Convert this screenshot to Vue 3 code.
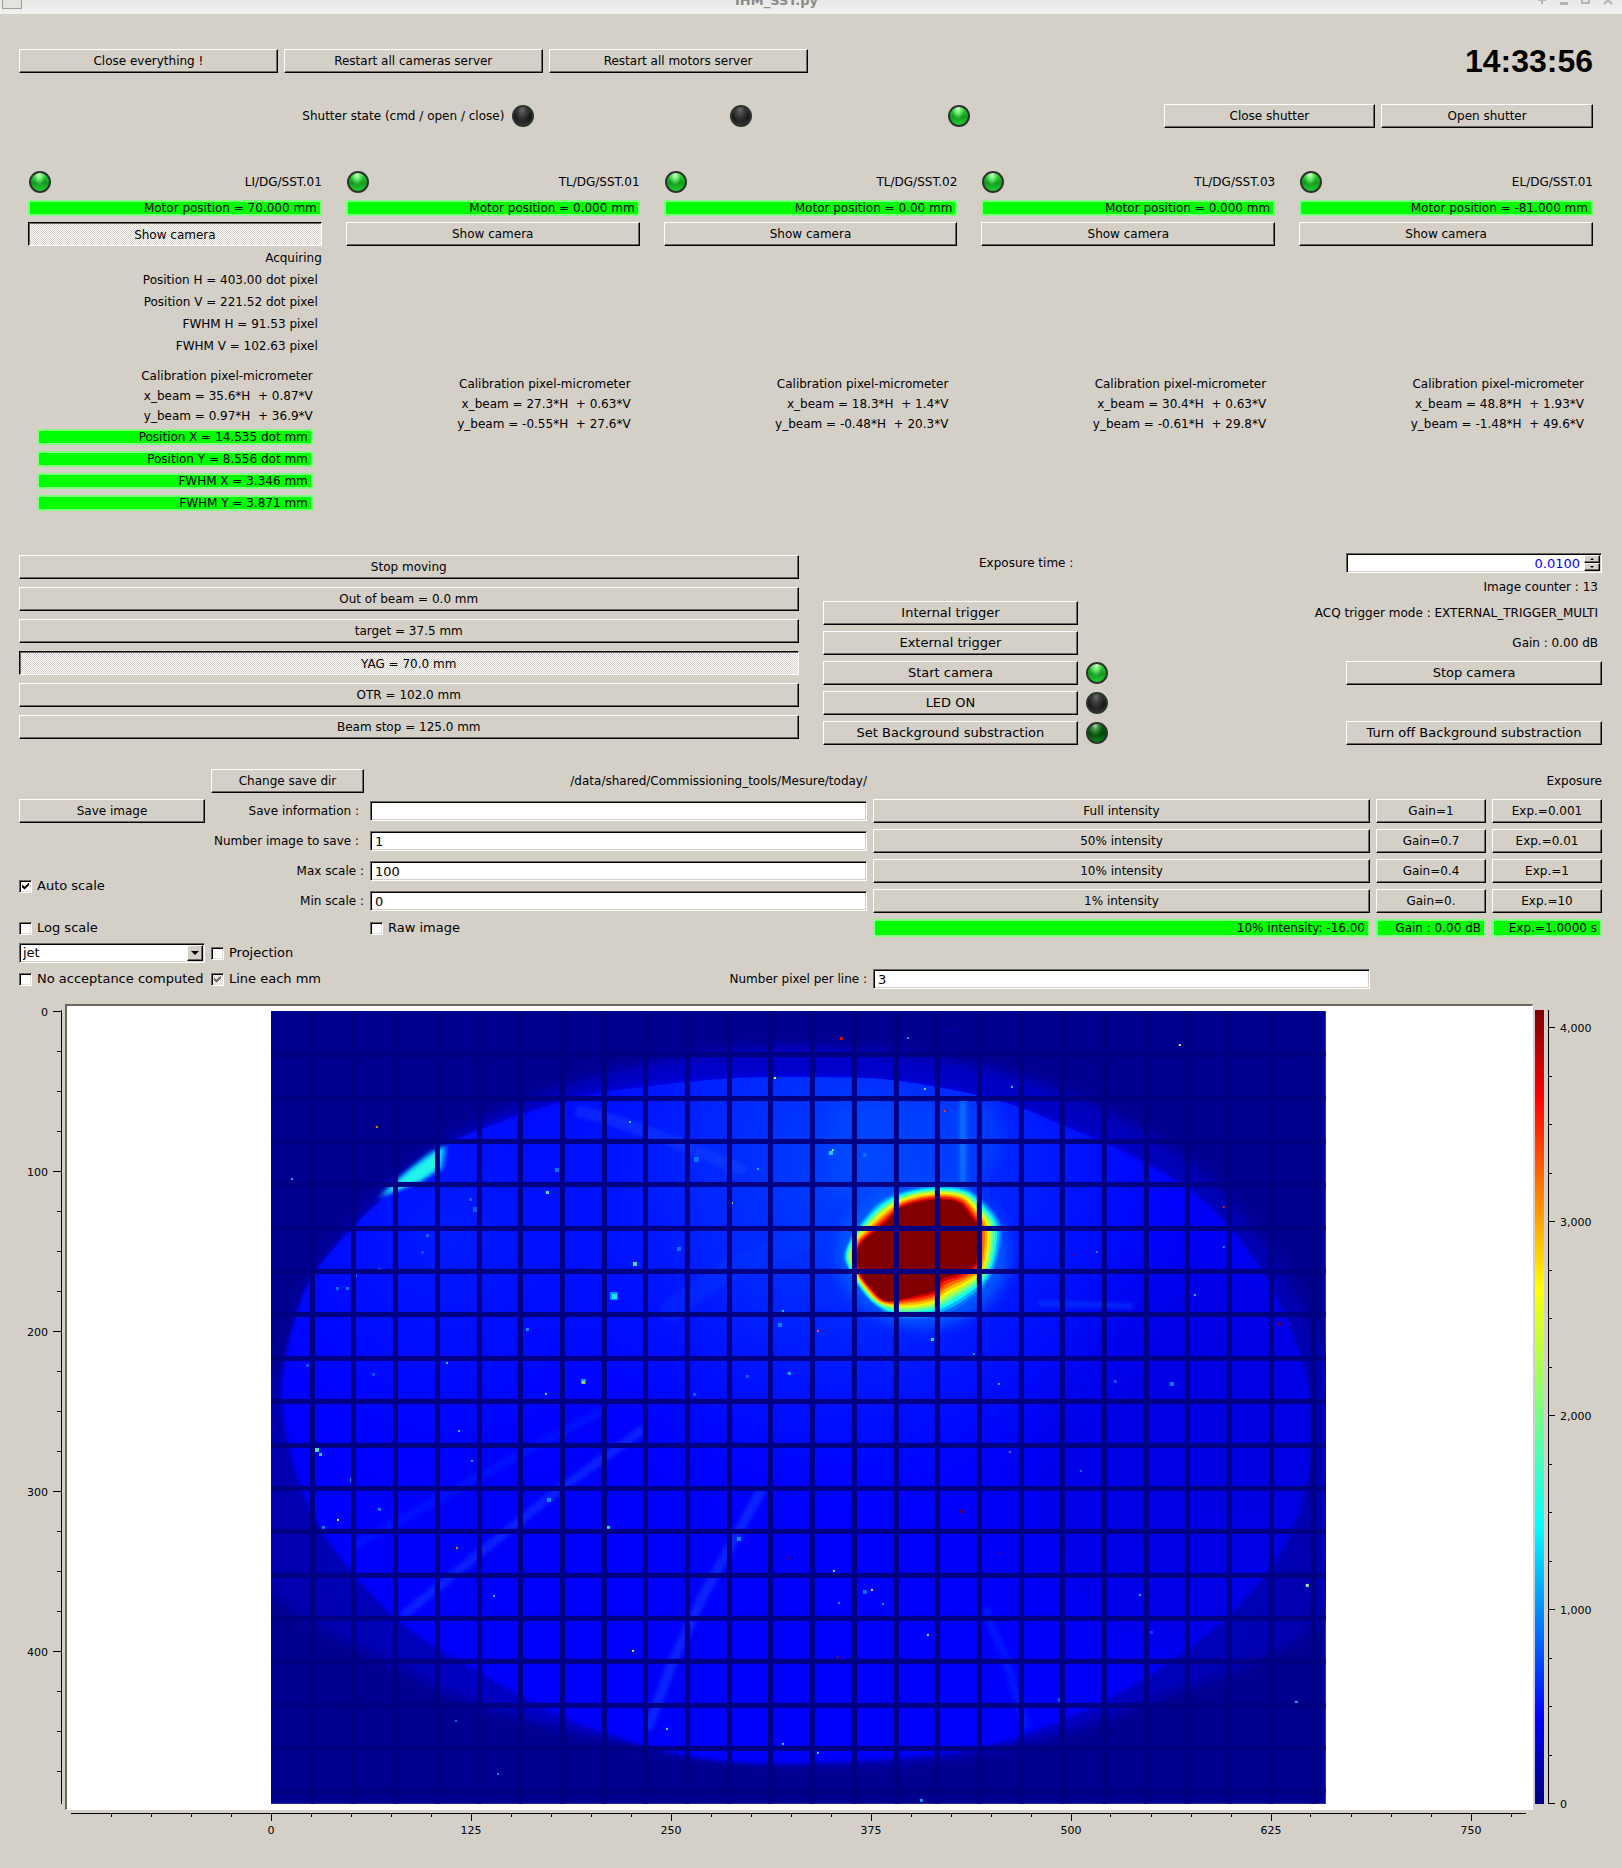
<script setup>
import { ref } from 'vue'

const stations = [
  { name: 'LI/DG/SST.01', motor: '70.000', x: '35.6*H  + 0.87*V', y: '0.97*H  + 36.9*V', active: true },
  { name: 'TL/DG/SST.01', motor: '0.000', x: '27.3*H  + 0.63*V', y: '-0.55*H  + 27.6*V' },
  { name: 'TL/DG/SST.02', motor: '0.00', x: '18.3*H  + 1.4*V', y: '-0.48*H  + 20.3*V' },
  { name: 'TL/DG/SST.03', motor: '0.000', x: '30.4*H  + 0.63*V', y: '-0.61*H  + 29.8*V' },
  { name: 'EL/DG/SST.01', motor: '-81.000', x: '48.8*H  + 1.93*V', y: '-1.48*H  + 49.6*V' }
]
const readings = [
  'Position H = 403.00 dot pixel',
  'Position V = 221.52 dot pixel',
  'FWHM H = 91.53 pixel',
  'FWHM V = 102.63 pixel'
]
const results = [
  'Position X = 14.535 dot mm',
  'Position Y = 8.556 dot mm',
  'FWHM X = 3.346 mm',
  'FWHM Y = 3.871 mm'
]
const moves = [
  'Stop moving',
  'Out of beam = 0.0 mm',
  'target = 37.5 mm',
  'YAG = 70.0 mm',
  'OTR = 102.0 mm',
  'Beam stop = 125.0 mm'
]
const activeMove = 3

const exposure = ref('0.0100')
const info = ref('')
const count = ref('1')
const maxScale = ref('100')
const minScale = ref('0')
const pixelsPerLine = ref('3')
const autoScale = ref(true)
const logScale = ref(false)
const rawImage = ref(false)
const projection = ref(false)
const noAcceptance = ref(false)
const lineEachMm = ref(true)
const colormap = ref('jet')

const presets = [
  ['Full intensity', 'Gain=1', 'Exp.=0.001'],
  ['50% intensity', 'Gain=0.7', 'Exp.=0.01'],
  ['10% intensity', 'Gain=0.4', 'Exp.=1'],
  ['1% intensity', 'Gain=0.', 'Exp.=10']
]

/* axes, as a percentage of the axis length */
const rowTicks = Array.from({ length: 20 }, (_, i) => ({
  pos: ((8 + i * 40) / 806) * 100 + '%',
  label: i % 4 === 0 ? String(i * 25) : ''
}))
const colTicks = Array.from({ length: 36 }, (_, k) => {
  const i = k - 4
  return {
    pos: ((206 + i * 40) / 1468) * 100 + '%',
    label: i >= 0 && i % 5 === 0 ? String(i * 25) : ''
  }
})
  .filter((t) => parseFloat(t.pos) < 99)
const levelTicks = Array.from({ length: 17 }, (_, i) => ({
  pos: ((800 - i * 48.5) / 806) * 100 + '%',
  label: i % 4 === 0 ? (i * 250).toLocaleString('en-US') : ''
}))

/* closed smooth outline through a list of points */
function smooth(p) {
  const n = p.length
  let d = `M${p[0][0]} ${p[0][1]}`
  for (let i = 0; i < n; i++) {
    const a = p[(i + n - 1) % n], b = p[i], c = p[(i + 1) % n], e = p[(i + 2) % n]
    d += `C${b[0] + (c[0] - a[0]) / 6} ${b[1] + (c[1] - a[1]) / 6} ${c[0] - (e[0] - b[0]) / 6} ${c[1] - (e[1] - b[1]) / 6} ${c[0]} ${c[1]}`
  }
  return d + 'Z'
}

const halo = smooth([
  [8, 360], [40, 265], [105, 184], [180, 126], [269, 84], [369, 54], [470, 38], [560, 36], [680, 50], [789, 78],
  [909, 142], [989, 225], [1050, 330], [1100, 450], [1055, 600], [979, 653], [879, 690], [789, 723], [679, 746],
  [540, 752], [379, 736], [209, 695], [129, 658], [89, 638], [0, 582], [-60, 480]
])
const screen = smooth([
  [11, 376], [24, 308], [44, 262], [86, 212], [130, 172], [180, 132], [250, 104], [330, 82], [450, 68], [540, 66],
  [629, 70], [729, 90], [800, 118], [879, 154], [939, 196], [985, 252], [1019, 318], [1039, 390], [1036, 466],
  [1011, 538], [969, 592], [929, 628], [859, 676], [779, 714], [689, 740], [540, 752], [440, 749], [369, 733],
  [289, 704], [189, 650], [125, 607], [72, 550], [38, 495], [18, 435]
])

const outer = [
  [120, 225], [180, 160], [260, 125], [350, 112], [440, 122], [500, 170], [540, 230], [535, 310], [510, 385],
  [470, 430], [400, 478], [330, 500], [230, 503], [165, 468], [125, 425], [90, 370], [73, 320], [95, 260]
]
const inner = [
  [150, 260], [200, 218], [245, 175], [340, 152], [415, 160], [455, 205], [472, 235], [472, 310], [462, 350],
  [415, 375], [368, 390], [345, 425], [270, 445], [200, 456], [155, 420], [122, 375], [112, 320], [122, 285]
]
const jet = ['#0070ff', '#00b4ff', '#10f8f0', '#58ffa8', '#a0ff58', '#f0f808', '#ffb800', '#ff7000', '#ff2800', '#d00000', '#800000']
const beam = jet.map((color, k) => {
  const t = (k - 0.6) / (jet.length - 1.6)
  return {
    color,
    d: smooth(outer.map((o, i) => [
      549 + (o[0] + (inner[i][0] - o[0]) * t) / 3,
      138 + (o[1] + (inner[i][1] - o[1]) * t) / 3
    ]))
  }
})

const gridCols = Array.from({ length: 25 }, (_, i) => Math.round((i + 1) * 41.7) - 3)
const gridRows = Array.from({ length: 18 }, (_, i) => Math.round((i + 1) * 43.35) - 2)

/* bright pixels and dust: x, y, size, colour */
const specks = [
  [105, 115, 2, '#ff7000'], [20, 167, 2, '#10b0e0'], [362, 251, 4, '#40e0c0'], [339, 281, 8, '#0090ff'],
  [341, 283, 5, '#20e0f0'], [310, 368, 5, '#1090f0'], [311, 370, 3, '#90e060'], [44, 437, 4, '#40e8a0'],
  [48, 442, 3, '#20d0f0'], [275, 180, 3, '#50e0b0'], [358, 110, 2, '#30d0d0'], [460, 191, 2, '#80f070'],
  [486, 157, 2, '#10c0e0'], [503, 66, 2, '#d0ff30'], [423, 146, 5, '#0a70ff'], [284, 157, 4, '#0a78ff'],
  [406, 236, 4, '#0a70ff'], [255, 317, 3, '#1090ff'], [274, 382, 2, '#30f0f0'], [175, 351, 2, '#20e0d0'],
  [187, 419, 2, '#20d0f0'], [200, 449, 2, '#20b0f0'], [79, 467, 4, '#1090ff'], [107, 497, 3, '#0a80ff'],
  [51, 515, 3, '#1080ff'], [66, 508, 2, '#d0f040'], [185, 536, 2, '#ff7000'], [222, 584, 2, '#30c0f0'],
  [361, 639, 2, '#f0d020'], [184, 709, 2, '#1070f0'], [226, 762, 2, '#1090e0'], [395, 717, 2, '#40f0f0'],
  [511, 732, 2, '#40e0f0'], [336, 515, 3, '#20f0e0'], [466, 526, 4, '#1090ff'], [276, 487, 4, '#1090ff'],
  [516, 546, 2, '#800000'], [517, 361, 3, '#20b0ff'], [507, 312, 4, '#1080ff'], [511, 299, 2, '#20d0e0'],
  [569, 26, 3, '#d01010'], [636, 26, 2, '#1090e0'], [683, 19, 2, '#0000e0'], [908, 33, 2, '#c0ff60'],
  [740, 75, 2, '#20d0d0'], [653, 77, 2, '#60e0a0'], [673, 99, 2, '#ff3000'], [558, 140, 4, '#20d0f0'],
  [561, 138, 2, '#60f0c0'], [592, 142, 4, '#0a70ff'], [952, 195, 2, '#d02000'], [952, 235, 2, '#1090f0'],
  [800, 243, 2, '#500060'], [825, 240, 2, '#1080f0'], [1007, 311, 3, '#700020'], [923, 283, 2, '#30c0ff'],
  [546, 319, 2, '#f06020'], [660, 327, 3, '#20f0f0'], [702, 342, 2, '#20a0f0'], [727, 372, 2, '#20c0e0'],
  [899, 371, 4, '#0a80ff'], [843, 369, 3, '#0a50ff'], [809, 459, 2, '#0a70ff'], [689, 499, 3, '#600040'],
  [738, 440, 2, '#806080'], [728, 541, 2, '#400080'], [600, 578, 2, '#c0f060'], [562, 559, 2, '#a0e0a0'],
  [592, 579, 4, '#0a70ff'], [611, 592, 2, '#1090f0'], [656, 623, 2, '#c0e060'], [567, 591, 2, '#20a0f0'],
  [566, 645, 2, '#a00020'], [868, 583, 2, '#20c0f0'], [1035, 573, 3, '#a0f0a0'], [1024, 690, 3, '#10b0f0'],
  [649, 788, 3, '#10a0f0'], [546, 741, 2, '#40e0f0'], [879, 620, 3, '#0a40ff'], [787, 687, 4, '#0a60ff'],
  [107, 257, 3, '#0a60ff'], [65, 276, 3, '#0a70ff'], [83, 263, 3, '#0a60ff'], [75, 276, 3, '#0a80ff'],
  [202, 196, 5, '#0a60ff'], [198, 187, 3, '#0a60ff'], [155, 223, 3, '#0a70ff'], [150, 240, 3, '#0a50ff'],
  [475, 364, 3, '#0a60ff'], [422, 382, 3, '#0a60ff'], [101, 362, 3, '#0a50ff'], [35, 353, 3, '#0a50ff']
]
</script>

<template>
  <div class="window">
    <header class="titlebar">
      <span class="sysmenu"></span>
      <span class="title">IHM_SST.py</span>
      <svg class="winctl" width="80" height="12" viewBox="0 0 80 12" aria-hidden="true">
        <path d="M5 0h8M9 -4v8M28 3h6v1h-6zM49 -4v7h7v-7M71 4l4-4 4 4" fill="none" stroke="#b4b4b2" stroke-width="2" />
      </svg>
    </header>

    <section class="bar-top">
      <button type="button">Close everything !</button>
      <button type="button">Restart all cameras server</button>
      <button type="button">Restart all motors server</button>
      <time class="clock">14:33:56</time>
    </section>

    <section class="shutter">
      <span class="right">Shutter state (cmd / open / close)</span>
      <i class="led off"></i>
      <i class="led off"></i>
      <i class="led on"></i>
      <button type="button">Close shutter</button>
      <button type="button">Open shutter</button>
    </section>

    <section class="stations">
      <article v-for="s in stations" :key="s.name" class="station">
        <div class="station-head">
          <i class="led on"></i>
          <span>{{ s.name }}</span>
        </div>
        <div class="ok">Motor position = {{ s.motor }} mm</div>
        <button type="button" :class="{ pressed: s.active }">Show camera</button>
        <div v-if="s.active" class="live">
          <p class="status">Acquiring</p>
          <p v-for="r in readings" :key="r">{{ r }}</p>
        </div>
        <div class="calibration" :class="{ idle: !s.active }">
          <p>Calibration pixel-micrometer</p>
          <p>x_beam = {{ s.x }}</p>
          <p>y_beam = {{ s.y }}</p>
        </div>
        <div v-if="s.active" class="results">
          <div v-for="r in results" :key="r" class="ok">{{ r }}</div>
        </div>
      </article>
    </section>

    <section class="controls">
      <div class="moves">
        <button v-for="(m, i) in moves" :key="m" type="button" :class="{ pressed: i === activeMove }">{{ m }}</button>
      </div>
      <div class="camera">
        <label class="right inset" for="exposure">Exposure time :</label>
        <div class="spin">
          <input id="exposure" v-model="exposure" type="text" inputmode="decimal" />
          <div class="spin-buttons">
            <button type="button" aria-label="Increase"><svg viewBox="0 0 4 2"><path d="M0 2h4L2 0z" /></svg></button>
            <button type="button" aria-label="Decrease"><svg viewBox="0 0 4 2"><path d="M0 0h4L2 2z" /></svg></button>
          </div>
        </div>
        <span class="wide">Image counter : 13</span>
        <button type="button">Internal trigger</button>
        <span class="two">ACQ trigger mode : EXTERNAL_TRIGGER_MULTI</span>
        <button type="button">External trigger</button>
        <span class="two">Gain : 0.00 dB</span>
        <button type="button">Start camera</button>
        <i class="led on"></i>
        <button type="button">Stop camera</button>
        <button type="button">LED ON</button>
        <i class="led off"></i>
        <span></span>
        <button type="button">Set Background substraction</button>
        <i class="led dim"></i>
        <button type="button">Turn off Background substraction</button>
      </div>
    </section>

    <section class="save">
      <button class="c2" type="button">Change save dir</button>
      <span class="c3 right">/data/shared/Commissioning_tools/Mesure/today/</span>
      <span class="c6 right">Exposure</span>

      <button class="c1 r2" type="button">Save image</button>
      <label class="c2 r2 right inset" for="info">Save information :</label>
      <input id="info" v-model="info" class="c3 r2" type="text" />
      <label class="c2 r3 right inset" for="count">Number image to save :</label>
      <input id="count" v-model="count" class="c3 r3" type="text" />
      <label class="c2 r4 right" for="max">Max scale :</label>
      <input id="max" v-model="maxScale" class="c3 r4" type="text" />
      <label class="c2 r5 right" for="min">Min scale :</label>
      <input id="min" v-model="minScale" class="c3 r5" type="text" />
      <label class="check c1 auto"><input v-model="autoScale" type="checkbox" />Auto scale</label>

      <div class="presets">
        <template v-for="row in presets" :key="row[0]">
          <button v-for="p in row" :key="p" type="button">{{ p }}</button>
        </template>
      </div>

      <label class="check c1 r6"><input v-model="logScale" type="checkbox" />Log scale</label>
      <label class="check c3 r6"><input v-model="rawImage" type="checkbox" />Raw image</label>
      <div class="ok c4 r6">10% intensity: -16.00</div>
      <div class="ok c5 r6">Gain : 0.00 dB</div>
      <div class="ok c6 r6">Exp.=1.0000 s</div>

      <div class="combo c1 r7">
        <select v-model="colormap" aria-label="Colormap">
          <option>jet</option>
          <option>gray</option>
          <option>hot</option>
        </select>
        <span class="arrow"><svg viewBox="0 0 8 4"><path d="M0 0h8L4 4z" /></svg></span>
      </div>
      <label class="check c2 r7"><input v-model="projection" type="checkbox" />Projection</label>

      <label class="check c1 r8"><input v-model="noAcceptance" type="checkbox" />No acceptance computed</label>
      <label class="check c2 r8"><input v-model="lineEachMm" type="checkbox" class="partial" />Line each mm</label>
      <label class="c3 r8 right" for="ppl">Number pixel per line :</label>
      <input id="ppl" v-model="pixelsPerLine" class="c4 r8" type="text" />
    </section>

    <section class="plot">
      <svg class="axis rows" aria-hidden="true">
        <line x1="61" x2="61" y1="6" y2="99.3%" />
        <template v-for="t in rowTicks" :key="t.pos">
          <line :x1="t.label ? 53 : 57" x2="61" :y1="t.pos" :y2="t.pos" />
          <text v-if="t.label" x="48" :y="t.pos" dy="4" text-anchor="end">{{ t.label }}</text>
        </template>
      </svg>

      <div class="frame">
        <svg class="image" viewBox="0 0 1055 793" preserveAspectRatio="none" role="img" aria-label="Beam image">
          <defs>
            <radialGradient id="haloFill" gradientUnits="userSpaceOnUse" cx="530" cy="420" r="600">
              <stop offset="0.500" stop-color="#0000d8" />
              <stop offset="0.750" stop-color="#0000b8" />
              <stop offset="1" stop-color="#0000a8" />
            </radialGradient>
            <radialGradient id="warm" gradientUnits="userSpaceOnUse" cx="580" cy="160" r="360">
              <stop offset="0" stop-color="#0044ff" />
              <stop offset="0.450" stop-color="#002cff" stop-opacity="0.800" />
              <stop offset="1" stop-color="#0010ff" stop-opacity="0" />
            </radialGradient>
            <radialGradient id="warmLeft" gradientUnits="userSpaceOnUse" cx="180" cy="220" r="260">
              <stop offset="0" stop-color="#001cff" />
              <stop offset="1" stop-color="#0010ff" stop-opacity="0" />
            </radialGradient>
            <radialGradient id="cool" gradientUnits="userSpaceOnUse" cx="960" cy="450" r="340">
              <stop offset="0" stop-color="#0000e0" />
              <stop offset="0.500" stop-color="#0000e8" stop-opacity="0.900" />
              <stop offset="1" stop-color="#0000ff" stop-opacity="0" />
            </radialGradient>
            <filter id="soft2"><feGaussianBlur stdDeviation="2" /></filter>
            <filter id="soft4"><feGaussianBlur stdDeviation="6" /></filter>
            <filter id="soft7"><feGaussianBlur stdDeviation="7" /></filter>
            <clipPath id="screenClip"><path :d="screen" /></clipPath>
          </defs>
          <rect width="1055" height="793" fill="#000090" />
          <path :d="halo" fill="url(#haloFill)" filter="url(#soft4)" />
          <path d="M220 116Q520 6 860 142L860 190H220z" fill="#0000e0" filter="url(#soft7)" />
          <path :d="screen" fill="#0000ff" filter="url(#soft2)" />
          <g clip-path="url(#screenClip)">
            <rect width="1055" height="793" fill="url(#cool)" />
            <rect width="1055" height="793" fill="url(#warmLeft)" />
            <rect width="1055" height="793" fill="url(#warm)" />
            <path d="M560 90H720L735 130 690 210 560 180z" fill="#0050ff" opacity="0.500" filter="url(#soft7)" />
            <g fill="none" stroke-linecap="round" filter="url(#soft2)">
              <path d="M134 603L215 537 280 485 370 420" stroke="#1440ff" stroke-width="9" opacity="0.500" />
              <path d="M378 715L400 655 432 585 490 480" stroke="#1448ff" stroke-width="10" opacity="0.500" />
              <path d="M84 534L200 470 330 400" stroke="#0a28ff" stroke-width="9" opacity="0.400" />
              <path d="M310 101Q350 108 470 158" stroke="#1248ff" stroke-width="12" opacity="0.400" />
              <path d="M715 600L735 650 755 715" stroke="#0a28ff" stroke-width="9" opacity="0.500" />
              <path d="M770 292L860 295" stroke="#0a48ff" stroke-width="5" opacity="0.600" />
              <path d="M400 300Q470 240 560 225" stroke="#0a38ff" stroke-width="22" opacity="0.400" />
              <path d="M692 92V176" stroke="#1080ff" stroke-width="7" opacity="0.800" />
            </g>
          </g>
          <path d="M106 188L126 168 158 142 176 134 172 158 128 178z" fill="#0090ff" filter="url(#soft2)" />
          <path d="M112 184L140 159 172 136 168 156 150 170z" fill="#20f4e8" filter="url(#soft2)" />
          <ellipse cx="652" cy="244" rx="86" ry="72" fill="#0058ff" filter="url(#soft7)" />
          <path v-for="b in beam" :key="b.color" :d="b.d" :fill="b.color" />
          <rect v-for="(s, i) in specks" :key="i" :x="s[0]" :y="s[1]" :width="s[2]" :height="s[2]" :fill="s[3]" />
          <g fill="#000082">
            <rect v-for="x in gridCols" :key="'c' + x" :x="x" y="0" width="5" height="793" />
            <rect v-for="y in gridRows" :key="'r' + y" x="0" :y="y" width="1055" height="5" />
          </g>
        </svg>
      </div>

      <div class="scale">
        <div class="ramp"></div>
        <svg class="axis levels" aria-hidden="true">
          <line x1="4" x2="4" y1="6" y2="99.3%" />
          <template v-for="t in levelTicks" :key="t.pos">
            <line x1="4" :x2="t.label ? 11 : 8" :y1="t.pos" :y2="t.pos" />
            <text v-if="t.label" x="16" :y="t.pos" dy="4">{{ t.label }}</text>
          </template>
        </svg>
      </div>

      <svg class="axis cols" aria-hidden="true">
        <line x1="6" x2="99.5%" y1="3" y2="3" />
        <template v-for="t in colTicks" :key="t.pos">
          <line :x1="t.pos" :x2="t.pos" y1="3" :y2="t.label ? 11 : 7" />
          <text v-if="t.label" :x="t.pos" y="24" text-anchor="middle">{{ t.label }}</text>
        </template>
      </svg>
    </section>
  </div>
</template>

<style>
body {
  margin: 0;
  background: #d4d0c8;
}
</style>

<style scoped>
.window {
  font-family: 'DejaVu Sans', sans-serif;
  font-size: 12px;
  line-height: 16px;
  color: #000;
  background: #d4d0c8;
}
p {
  margin: 0;
  white-space: pre;
}
button {
  box-sizing: border-box;
  height: 24px;
  min-width: 0;
  margin: 0;
  padding: 0;
  font: inherit;
  color: inherit;
  white-space: nowrap;
  background: #d4d0c8;
  border: 1px solid #000;
  border-top-color: #fff;
  border-left-color: #fff;
  border-radius: 0;
  box-shadow: inset -1px -1px #6b665f;
}
button.pressed {
  padding-top: 2px;
  background: repeating-conic-gradient(#fff 0 25%, #d4d0c8 0 50%) 0 0 / 2px 2px;
  border-color: #000 #fff #fff #000;
  box-shadow: inset 1px 1px #6b665f;
}
input[type='text'],
.combo {
  box-sizing: border-box;
  width: 100%;
  min-width: 0;
  height: 20px;
  margin: 0;
  padding: 0 4px;
  font: inherit;
  font-size: 13px;
  color: inherit;
  background: #fff;
  border: 1px solid #6b665f;
  border-right-color: #fff;
  border-bottom-color: #fff;
  border-radius: 0;
  box-shadow: inset 1px 1px #000, inset -1px -1px #d4d0c8;
}
.right {
  text-align: right;
}
.right.inset {
  padding-right: 5px;
}
.ok {
  box-sizing: border-box;
  height: 16px;
  padding: 0 3px;
  line-height: 12px;
  text-align: right;
  white-space: nowrap;
  background: #0f0;
  border: 2px solid #80ff80;
}

.led {
  box-sizing: border-box;
  display: block;
  width: 22px;
  height: 22px;
  border: 2px solid #2c352c;
  border-radius: 50%;
}
.led.on {
  background: radial-gradient(ellipse at 45% 8%, #e4ffe4 0, #7df07d 18%, transparent 45%),
    linear-gradient(#2ee03a, #149a20 55%, #20d030);
}
.led.dim {
  background: radial-gradient(ellipse at 40% 8%, #b0d8b0 0, #3c8c3c 22%, transparent 48%),
    linear-gradient(#0a6a12, #04480a 55%, #0c8418);
}
.led.off {
  background: radial-gradient(ellipse at 45% 15%, #6a6a6a 0, #3c3c3c 30%, transparent 60%),
    linear-gradient(#2c2c2c, #181818 60%, #303030);
}

.titlebar {
  display: grid;
  grid-template-columns: 60px 1fr 129px;
  height: 14px;
  overflow: hidden;
  background: linear-gradient(#e9e9e7, #f0f0ee);
}
.sysmenu {
  box-sizing: border-box;
  width: 20px;
  height: 9px;
  margin-left: 2px;
  background: #e2e4e0;
  border: 1px solid #9c9e9a;
  border-top: 0;
}
.title {
  margin-top: -7px;
  font-size: 13px;
  font-weight: bold;
  text-align: center;
  color: #8a8a88;
}
.winctl {
  margin-left: 40px;
}

.bar-top {
  display: grid;
  grid-template-columns: 259fr 259fr 259fr 780fr;
  gap: 6px;
  padding: 35px 29px 0 19px;
}
.clock {
  font: bold 32px/24px 'Liberation Sans', sans-serif;
  text-align: right;
}

.shutter {
  display: grid;
  grid-template-columns: 486fr repeat(5, 212fr);
  align-items: center;
  gap: 6px;
  padding: 31px 29px 0 19px;
}
.shutter .led {
  margin-left: 2px;
}

.stations {
  display: grid;
  grid-template-columns: repeat(5, 1fr);
  gap: 24px;
  padding: 43px 29px 0 28px;
}
.station {
  display: flex;
  flex-direction: column;
  text-align: right;
}
.station-head {
  display: flex;
  align-items: center;
  justify-content: space-between;
  margin-bottom: 7px;
  padding-left: 1px;
}
.station .ok {
  margin-bottom: 6px;
}
.live p {
  padding-right: 4px;
  line-height: 22px;
}
.live .status {
  padding: 2px 0 0;
  line-height: 21px;
}
.calibration {
  padding: 9px 9px 0 0;
  line-height: 20px;
}
.calibration.idle {
  padding-top: 128px;
}
.results {
  padding: 3px 9px 0;
}

.controls {
  display: grid;
  grid-template-columns: 1fr 1fr;
  gap: 24px;
  padding: 36px 20px 0 19px;
}
.moves {
  display: grid;
  gap: 8px;
  align-content: start;
  padding-top: 2px;
}
.camera {
  display: grid;
  grid-template-columns: repeat(3, 1fr);
  grid-template-rows: 20px 16px repeat(5, 24px);
  gap: 6px;
  align-items: center;
}
.camera button {
  font-size: 13px;
}
.camera .wide {
  grid-column: 1 / -1;
  text-align: right;
}
.camera .two {
  grid-column: span 2;
  text-align: right;
}
.camera .wide,
.camera .two {
  padding-right: 4px;
}
.camera .led {
  margin-left: 2px;
}
.spin {
  grid-column: 3;
  position: relative;
}
.spin input[type='text'] {
  display: block;
  padding-right: 21px;
  text-align: right;
  color: #00f;
}
.spin-buttons {
  position: absolute;
  top: 2px;
  right: 2px;
  display: grid;
  width: 16px;
}
.spin-buttons button {
  display: flex;
  align-items: center;
  justify-content: center;
  height: 8px;
}
.spin-buttons svg {
  width: 4px;
  height: 2px;
}

.save {
  display: grid;
  grid-template-columns: 186px 153px 1fr 1fr 110px 110px;
  grid-template-rows: repeat(5, 24px) 18px 20px 20px;
  gap: 6px;
  align-items: center;
  padding: 24px 20px 0 19px;
}
.c1 { grid-column: 1; }
.c2 { grid-column: 2; }
.c3 { grid-column: 3; }
.c4 { grid-column: 4; }
.c5 { grid-column: 5; }
.c6 { grid-column: 6; }
.r2 { grid-row: 2; }
.r3 { grid-row: 3; }
.r4 { grid-row: 4; }
.r5 { grid-row: 5; }
.r6 { grid-row: 6; }
.r7 { grid-row: 7; }
.r8 { grid-row: 8; }
.save label {
  white-space: nowrap;
}
.auto {
  grid-row: 4 / 6;
}
.presets {
  grid-column: 4 / -1;
  grid-row: 2 / 6;
  display: grid;
  grid-template-columns: 1fr 110px 110px;
  gap: 6px;
}
.save .ok {
  height: 18px;
  line-height: 14px;
}
.check {
  display: flex;
  align-items: center;
  gap: 5px;
  font-size: 13px;
}
.check input {
  box-sizing: border-box;
  position: relative;
  flex: none;
  width: 13px;
  height: 13px;
  margin: 0;
  appearance: none;
  background: #fff;
  border: 1px solid #6b665f;
  border-right-color: #fff;
  border-bottom-color: #fff;
  box-shadow: inset 1px 1px #000, inset -1px -1px #e4e2dc;
}
.check input:checked::after {
  content: '';
  position: absolute;
  inset: 2px;
  background: #000;
  clip-path: polygon(0 28%, 36% 62%, 100% 0, 100% 40%, 36% 100%, 0 68%);
}
.check input.partial {
  background: repeating-conic-gradient(#fff 0 25%, #d4d0c8 0 50%) 0 0 / 2px 2px;
}
.check input.partial:checked::after {
  background: #6b665f;
}
.combo {
  display: flex;
  padding: 1px;
}
.combo select {
  flex: 1;
  min-width: 0;
  padding: 0 0 0 2px;
  font: inherit;
  color: inherit;
  appearance: none;
  background: none;
  border: 0;
}
.arrow {
  box-sizing: border-box;
  display: flex;
  align-items: center;
  justify-content: center;
  width: 16px;
  pointer-events: none;
  background: #d4d0c8;
  border: 1px solid #000;
  border-top-color: #fff;
  border-left-color: #fff;
  box-shadow: inset -1px -1px #6b665f;
}
.arrow svg {
  width: 8px;
  height: 4px;
}

.plot {
  display: grid;
  grid-template-columns: 65px 1fr 89px;
  padding-top: 15px;
}
.axis {
  display: block;
  width: 100%;
  height: 100%;
  font-size: 11px;
  shape-rendering: crispEdges;
}
.axis line {
  stroke: #000;
}
.frame {
  padding: 5px 0;
  background: #fff;
  border: 2px solid #6b665f;
  border-right: 1px solid #fff;
  border-bottom: 1px solid #fff;
}
.image {
  display: block;
  width: 72%;
  margin-left: 204px;
  aspect-ratio: 1055 / 793;
}
.rows,
.scale {
  height: 0;
  min-height: 100%;
}
.scale {
  display: grid;
  grid-template-columns: 9px 1fr;
  padding-left: 2px;
}
.ramp {
  margin: 6px 0;
  background: linear-gradient(#800000, #f00 11%, #ff0 35%, #7fff7f 50%, #0ff 65%, #00f 89%, #000080);
}
.cols {
  grid-column: 2;
  height: 54px;
}
</style>
